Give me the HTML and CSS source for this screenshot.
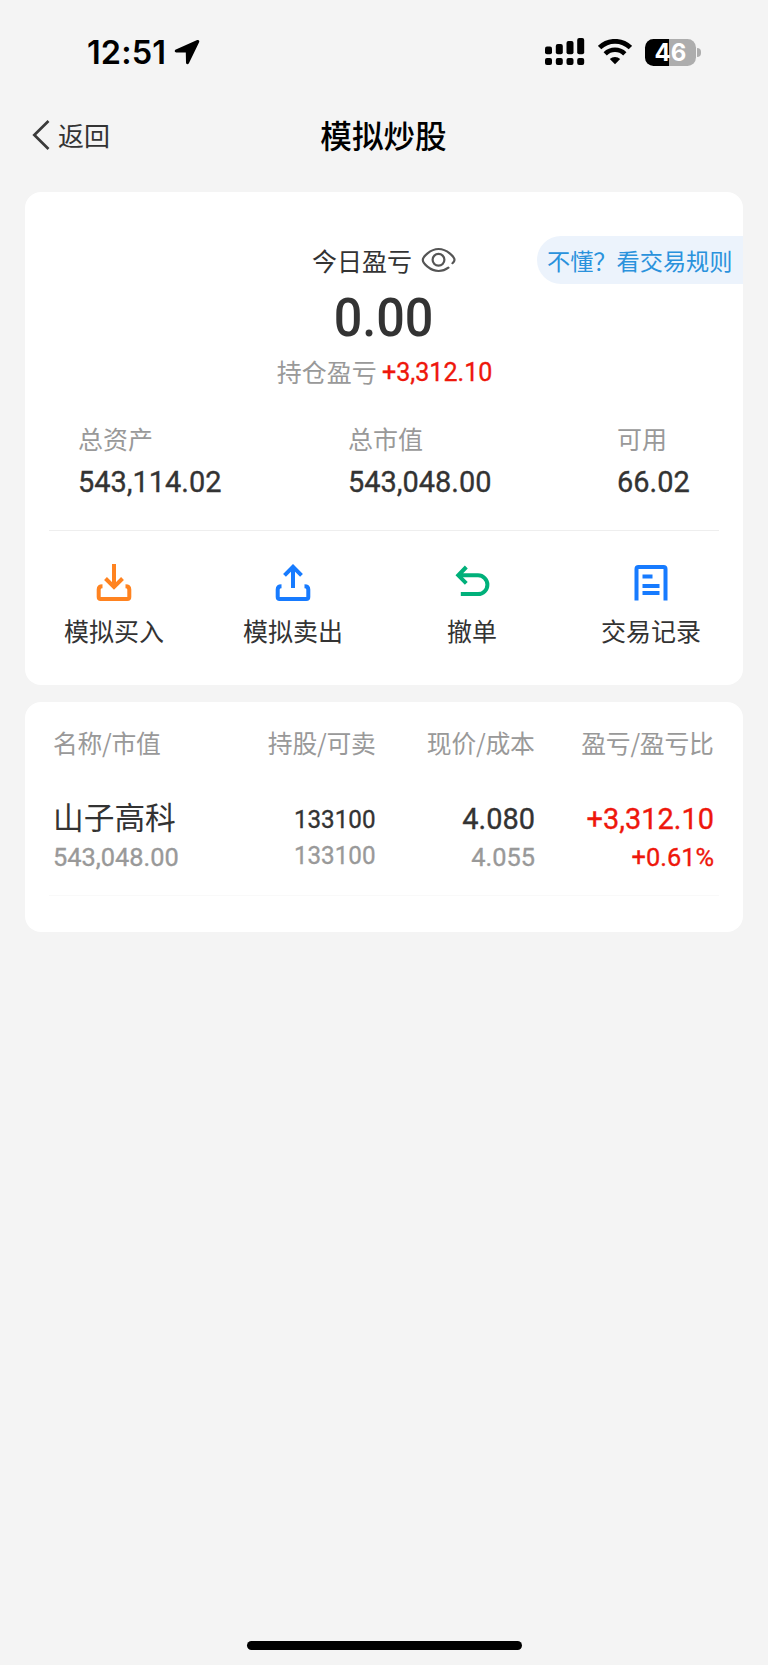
FILE: index.html
```html
<!DOCTYPE html>
<html lang="zh-CN">
<head>
<meta charset="utf-8">
<title>模拟炒股</title>
<link rel="stylesheet" href="styles.css">
</head>
<body>
<div class="screen">
  <header class="status">
    <span class="time">12:51</span>
    <svg class="loc" width="26" height="26" viewBox="0 0 26 26"><path d="M23.2 1.100 1.900 10.600C.2 11.400.5 13.500 2.300 13.500l9.500.1.2 10c0 1.800 2 2.200 2.900.6L25.100 3.200c.7-1.500-.4-2.700-1.900-2.100Z"/></svg>
    <svg class="signal" width="40" height="28" viewBox="0 0 40 28">
      <rect x="0" y="8.6" width="7" height="7.6" rx="2"/><rect x="10.8" y="6" width="7" height="10.2" rx="2"/><rect x="21.5" y="3" width="7" height="13.2" rx="2"/><rect x="32.2" y="0" width="7" height="16.2" rx="2"/>
      <rect x="0" y="20" width="7" height="7" rx="2"/><rect x="10.8" y="20" width="7" height="7" rx="2"/><rect x="21.5" y="20" width="7" height="7" rx="2"/><rect x="32.2" y="20" width="7" height="7" rx="2"/>
    </svg>
    <svg class="wifi" width="34" height="26" viewBox="0 0 34 26">
      <path d="M1.600 8.600a22 22 0 0 1 30.800 0" fill="none" stroke="#000" stroke-width="4.800"/>
      <path d="M7.200 14.800a14 14 0 0 1 19.600 0" fill="none" stroke="#000" stroke-width="4.600"/>
      <path d="M11.800 20.100a7.800 7.800 0 0 1 10.400 0L17 25.200Z"/>
    </svg>
    <div class="battery"><span>46</span></div>
    <i class="cap"></i>
  </header>

  <nav class="nav">
    <a class="back">
      <svg width="18" height="32" viewBox="0 0 18 32"><path d="M16.500 2 2.300 16l14.200 14" fill="none" stroke="#3a3a3a" stroke-width="2.700"/></svg>
      <span>返回</span>
    </a>
    <h1>模拟炒股</h1>
  </nav>

  <main class="content">
    <section class="card account">
      <a class="rules">不懂？看交易规则</a>
      <div class="today">
        <span>今日盈亏</span>
        <svg width="36" height="26" viewBox="0 0 36 26" fill="none" stroke="#555" stroke-width="2.2" stroke-linecap="round">
          <path d="M31.500 16.200c1.300-1.200 2-2.300 2-3.200C33.500 10 26 2 17.600 2S1.800 10 1.800 13s7.200 11 15.800 11c3.900 0 7.200-1.300 9.800-3.300"/>
          <circle cx="17.500" cy="12.800" r="5.900"/>
        </svg>
      </div>
      <div class="total"><b class="num">0.00</b></div>
      <div class="hold"><span>持仓盈亏</span><b class="num">+3,312.10</b></div>
      <div class="stats">
        <div><span>总资产</span><b class="num">543,114.02</b></div>
        <div><span>总市值</span><b class="num">543,048.00</b></div>
        <div><span>可用</span><b class="num">66.02</b></div>
      </div>
      <div class="actions">
        <a>
          <svg width="36" height="38" viewBox="0 0 36 38" fill="none" stroke="#ff8320" stroke-width="4"><path d="M18 0v22M9.500 14.500 18 23l8.500-8.500M6.500 22.200C4 22.200 2.700 23.200 2.700 25.500V33q0 2 2 2h26.600q2 0 2-2v-7.500c0-2.300-1.300-3.300-3.800-3.300"/></svg>
          <span>模拟买入</span>
        </a>
        <a>
          <svg width="36" height="38" viewBox="0 0 36 38" fill="none" stroke="#177bff" stroke-width="4"><path d="M18 24V3M9.500 11.300 18 2.800l8.500 8.500M6.500 22.200C4 22.200 2.700 23.200 2.700 25.500V33q0 2 2 2h26.600q2 0 2-2v-7.500c0-2.300-1.300-3.300-3.800-3.300"/></svg>
          <span>模拟卖出</span>
        </a>
        <a>
          <svg width="36" height="38" viewBox="0 0 36 38" fill="none" stroke="#00b07a" stroke-width="4"><path d="M12.300 3 4.300 11.300l8 8M5 11.300h19a9.400 9.400 0 0 1 0 18.800H6.800"/></svg>
          <span>撤单</span>
        </a>
        <a>
          <svg width="36" height="38" viewBox="0 0 36 38" fill="none" stroke="#177bff" stroke-width="4"><path d="M3.500 36.500V5q0-2 2-2h25q2 0 2 2v31.500M9.500 12.500h10M9.500 22h17M9.500 29h17"/></svg>
          <span>交易记录</span>
        </a>
      </div>
    </section>

    <section class="card holdings">
      <div class="row head"><span>名称/市值</span><span>持股/可卖</span><span>现价/成本</span><span>盈亏/盈亏比</span></div>
      <div class="row item">
        <div><strong>山子高科</strong><small class="num">543,048.00</small></div>
        <div class="shares"><b class="num">133100</b><small class="num">133100</small></div>
        <div><b class="num">4.080</b><small class="num">4.055</small></div>
        <div class="gain"><b class="num">+3,312.10</b><small class="num">+0.61%</small></div>
      </div>
    </section>
  </main>
  <div class="home"></div>
</div>
</body>
</html>
```

FILE: styles.css
```css
* { box-sizing: border-box; }
body { margin: 0; background: #f4f4f4; color: #333; font-family: "Noto Sans CJK SC", sans-serif; }
.screen { height: 1665px; display: flex; flex-direction: column; }
svg { display: block; flex: none; }
.num { font-family: Roboto, "Noto Sans CJK SC", sans-serif; font-weight: 400; -webkit-text-stroke: 0.35px currentColor; transform: scaleX(0.965); transform-origin: left center; }

.status { height: 104px; padding: 0 67px 0 87px; display: flex; align-items: center; }
.time { font: 600 32.500px/40px Inter, sans-serif; color: #000; letter-spacing: 0.1px; padding-top: 2px; }
.loc { margin-left: 8px; }
.signal { margin-left: auto; }
.wifi { margin-left: 13px; }
.battery { width: 51px; height: 27px; margin-left: 13px; border-radius: 8.5px; background: linear-gradient(90deg, #000 0 24px, #adadad 24px); color: #fff; font: 700 24px/27px Inter, sans-serif; text-align: center; }
.cap { width: 4px; height: 9px; margin-left: 1px; border-radius: 0 4px 4px 0; background: #adadad; }

.nav { height: 88px; padding: 8px 32px 0; display: grid; grid-template-columns: 1fr auto 1fr; align-items: start; }
.back { display: flex; align-items: center; gap: 8px; height: 46px; font-size: 26px; line-height: 46px; }
.nav h1 { margin: 0 1px 0 0; font-size: 31.600px; line-height: 44px; font-weight: 500; color: #000; }

.content { padding: 0 25px; display: flex; flex-direction: column; gap: 17px; }
.card { background: #fff; border-radius: 16px; }
.account { position: relative; height: 493px; padding-top: 50px; font-size: 25px; }
.rules { position: absolute; right: 0; top: 44px; height: 48px; width: 206px; padding-left: 10px; border-radius: 24px 0 0 24px; background: #ecf3fc; color: #2a92dc; font-size: 23.200px; line-height: 49px; white-space: nowrap; }
.today { display: flex; justify-content: center; align-items: center; gap: 9px; height: 36px; padding-left: 1px; line-height: 36px; }
.total { display: flex; justify-content: center; height: 56px; margin-top: 12px; font-size: 53px; line-height: 56px; }
.total .num { font-weight: 500; transform: scaleX(0.95); transform-origin: center; -webkit-text-stroke: 0; }
.hold { margin-top: 7px; padding-left: 5px; display: flex; justify-content: center; gap: 5px; line-height: 36px; color: #999; }
.hold b { font-size: 26px; color: #ee170b; line-height: 38px; height: 36px; }
.stats { margin: 31px 50px 0 53px; display: grid; grid-template-columns: 270px 269px 1fr; }
.stats span { display: block; line-height: 36px; color: #999; }
.stats b { display: block; margin: 10px 0 0 -0.500px; font-size: 30px; line-height: 32px; }
.actions { margin: 32px 24px 0 24px; padding-top: 33px; border-top: 1px solid #eee; display: flex; }
.actions a { flex: 0 0 179px; display: flex; flex-direction: column; align-items: center; gap: 10px; line-height: 36px; position: relative; left: -24.500px; }

.holdings { height: 230px; padding: 22px 24px 0; }
.row { display: grid; grid-template-columns: 140px 182.500px 159px 179px; padding-left: 4px; text-align: right; }
.row > :first-child { text-align: left; }
.row > :not(:first-child) .num { transform-origin: right center; }
.head { font-size: 24.800px; line-height: 36px; color: #999; letter-spacing: -0.25px; }
.item { height: 136px; padding-top: 34px; border-bottom: 1px solid #f9f9f9; }
.item > div { display: flex; flex-direction: column; }
.item strong { font-weight: 400; font-size: 30.700px; line-height: 44px; }
.item b { font-size: 30px; line-height: 44px; padding-top: 3px; }
.item strong, .item b { height: 45.500px; }
.item small { font-size: 26.300px; line-height: 34px; color: #999; }
.item .shares b { font-size: 26.300px; }
.item .shares small { margin-top: -2px; }
.item .shares .num { transform: scaleX(0.92); }
.item .gain b, .item .gain small { color: #ee170b; }

.home { width: 275px; height: 9px; margin: auto auto 15px; border-radius: 5px; background: #000; }
```
